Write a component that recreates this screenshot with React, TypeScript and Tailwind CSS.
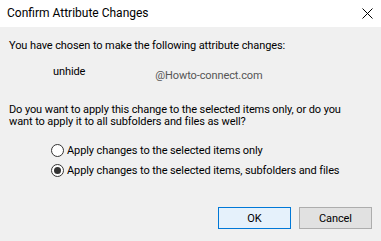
import React from 'react';

function Radio({ checked }: { checked?: boolean }) {
  return (
    <span className="w-[13px] h-[13px] rounded-full border border-[#333333] bg-white flex items-center justify-center flex-shrink-0">
      {checked && <span className="w-[7px] h-[7px] rounded-full bg-[#333333]" />}
    </span>
  );
}

export default function App() {
  return (
    <div
      className="w-[381px] h-[241px] flex flex-col bg-[#f0f0f0] text-[11px] leading-[15px] tracking-[-0.1px] text-black overflow-hidden"
      style={{ fontFamily: 'Roboto, "Liberation Sans", sans-serif' }}
    >
      {/* Title bar */}
      <div className="h-[27px] flex-shrink-0 bg-white flex items-center justify-between pl-[7px] pr-[8px]">
        <span className="text-[12px] tracking-normal">Confirm Attribute Changes</span>
        <svg width="11" height="11" viewBox="0 0 11 11">
          <path d="M0.5 0.5 L10.5 10.5 M10.5 0.5 L0.5 10.5" stroke="#000" strokeWidth="1" />
        </svg>
      </div>

      {/* Body */}
      <div className="flex-1 flex flex-col pl-[9px] pt-[11px]">
        <p className="whitespace-nowrap">You have chosen to make the following attribute changes:</p>

        <div className="flex items-start mt-[11px]">
          <span className="ml-[44px]">unhide</span>
          <span className="ml-[70px] mt-[4px] text-[#555555]">@Howto-connect.com</span>
        </div>

        <p className="mt-[21px] leading-[12px] whitespace-nowrap">
          Do you want to apply this change to the selected items only, or do you
          <br />
          want to apply it to all subfolders and files as well?
        </p>

        <div className="flex flex-col gap-[5px] mt-[15px] pl-[42px]">
          <label className="flex items-center gap-[3px] whitespace-nowrap">
            <Radio />
            <span>Apply changes to the selected items only</span>
          </label>
          <label className="flex items-center gap-[3px] whitespace-nowrap">
            <Radio checked />
            <span>Apply changes to the selected items, subfolders and files</span>
          </label>
        </div>

        <div className="flex justify-end gap-[8px] mt-[29px] pr-[9px]">
          <button className="w-[73px] h-[22px] border border-[#0078d7] bg-[#e5f1fb] flex items-center justify-center">
            OK
          </button>
          <button className="w-[73px] h-[22px] border border-[#adadad] bg-[#e1e1e1] flex items-center justify-center">
            Cancel
          </button>
        </div>
      </div>
    </div>
  );
}
